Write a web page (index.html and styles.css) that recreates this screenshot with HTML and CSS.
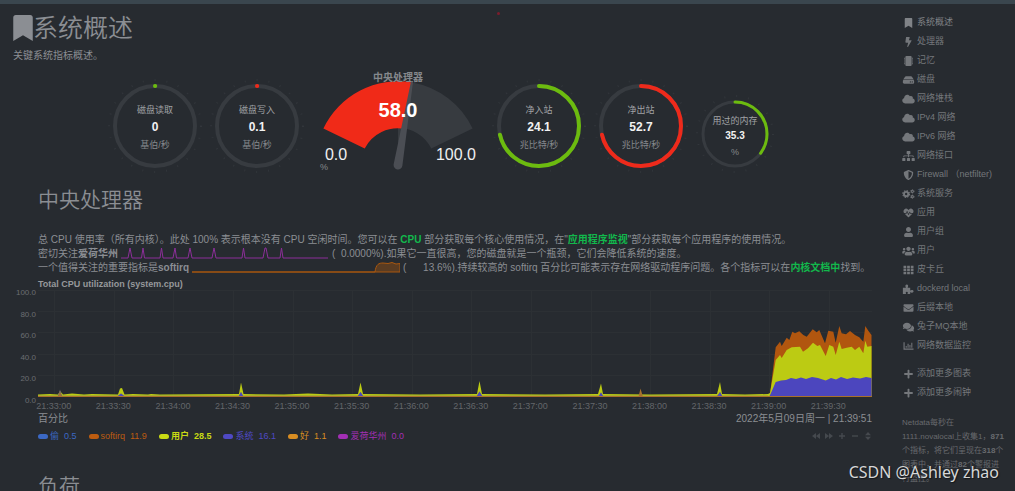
FILE: index.html
```html
<!DOCTYPE html>
<html lang="zh-CN">
<head>
<meta charset="utf-8">
<meta name="viewport" content="width=device-width, initial-scale=1">
<title>Netdata</title>
<link rel="stylesheet" href="styles.css">
</head>
<body>
<svg class="sprite" aria-hidden="true">
  <symbol id="bookmark" viewBox="0 0 384 512"><path d="M0 512V48C0 21.500 21.500 0 48 0h288c26.500 0 48 21.500 48 48v464L192 400 0 512z"/></symbol>
  <symbol id="bolt" viewBox="0 0 320 512"><path d="M296 160H180.600l42.600-129.800C227.200 15 215.700 0 200 0H56C44 0 33.800 8.900 32.200 20.800l-32 240C-1.700 275.200 9.500 288 24 288h118.700L96.600 482.500c-3.600 15.200 8 29.500 23.300 29.500 8.400 0 16.400-4.400 20.800-12l176-304c9.300-15.900-2.200-36-20.700-36z"/></symbol>
  <symbol id="chip" viewBox="0 0 512 512"><rect x="96" width="320" height="512" rx="48"/><path d="M30 88h46v48H30zM30 184h46v48H30zM30 280h46v48H30zM30 376h46v48H30zM436 88h46v48h-46zM436 184h46v48h-46zM436 280h46v48h-46zM436 376h46v48h-46z"/></symbol>
  <symbol id="hdd" viewBox="0 0 576 512"><path d="M576 304v96c0 26.510-21.490 48-48 48H48c-26.510 0-48-21.490-48-48v-96c0-26.510 21.490-48 48-48h480c26.510 0 48 21.490 48 48zm-48-80a79.557 79.557 0 0 1 30.777 6.165L462.250 85.374A48.003 48.003 0 0 0 422.311 64H153.689a48 48 0 0 0-39.938 21.374L17.223 230.165A79.557 79.557 0 0 1 48 224h480zm-48 96c-17.673 0-32 14.327-32 32s14.327 32 32 32 32-14.327 32-32-14.327-32-32-32zm-96 0c-17.673 0-32 14.327-32 32s14.327 32 32 32 32-14.327 32-32-14.327-32-32-32z"/></symbol>
  <symbol id="cloud" viewBox="0 0 640 512"><path d="M537.600 226.600c4.100-10.700 6.400-22.400 6.400-34.600 0-53-43-96-96-96-19.700 0-38.100 6-53.300 16.200C367 64.200 315.300 32 256 32c-88.400 0-160 71.600-160 160 0 2.700.1 5.400.2 8.100C40.200 219.800 0 273.200 0 336c0 79.500 64.500 144 144 144h368c70.700 0 128-57.300 128-128 0-61.900-44-113.600-102.400-125.400z"/></symbol>
  <symbol id="sitemap" viewBox="0 0 640 512"><path d="M128 352H32c-17.670 0-32 14.330-32 32v96c0 17.670 14.330 32 32 32h96c17.670 0 32-14.330 32-32v-96c0-17.670-14.330-32-32-32zm-24-80h192v48h48v-48h192v48h48v-57.590c0-21.170-17.230-38.410-38.410-38.410H344v-64h40c17.670 0 32-14.330 32-32V32c0-17.670-14.330-32-32-32H256c-17.670 0-32 14.330-32 32v96c0 17.670 14.330 32 32 32h40v64H94.410C73.230 224 56 241.230 56 262.410V320h48v-48zm264 80h-96c-17.670 0-32 14.330-32 32v96c0 17.670 14.330 32 32 32h96c17.670 0 32-14.330 32-32v-96c0-17.670-14.330-32-32-32zm240 0h-96c-17.670 0-32 14.330-32 32v96c0 17.670 14.330 32 32 32h96c17.670 0 32-14.330 32-32v-96c0-17.670-14.330-32-32-32z"/></symbol>
  <symbol id="shield" viewBox="0 0 512 512"><path d="M466.500 83.700l-192-80a48.150 48.150 0 0 0-36.900 0l-192 80C27.700 91.100 16 108.600 16 128c0 198.500 114.500 335.700 221.500 380.300 11.800 4.900 25.100 4.900 36.900 0C360.100 472.600 496 349.300 496 128c0-19.400-11.700-36.900-29.500-44.300zM256.100 446.300l-.1-381 175.900 73.300c-3.300 151.400-82.100 261.100-175.800 307.700z"/></symbol>
  <symbol id="cogs" viewBox="0 0 640 512"><g fill="none" stroke="currentColor"><circle cx="200" cy="256" r="110" stroke-width="100"/><circle cx="200" cy="256" r="172" stroke-width="60" stroke-dasharray="75 60"/><circle cx="515" cy="120" r="56" stroke-width="54"/><circle cx="515" cy="120" r="94" stroke-width="36" stroke-dasharray="46 52"/><circle cx="515" cy="395" r="56" stroke-width="54"/><circle cx="515" cy="395" r="94" stroke-width="36" stroke-dasharray="46 52"/></g></symbol>
  <symbol id="heart" viewBox="0 0 512 512"><path d="M320.200 243.800l-49.700 99.400c-6 12.100-23.400 11.700-28.900-.6l-56.900-126.300-30 71.700H60.600l182.500 186.500c7.100 7.300 18.600 7.300 25.700 0L451.400 288H342.300l-22.100-44.200zM473.700 73.900l-2.400-2.500c-51.500-52.600-135.800-52.600-187.400 0L256 100l-27.900-28.500c-51.500-52.700-135.900-52.700-187.400 0l-2.400 2.400C-10.400 123.700-12.500 203 31 256h102.400l35.900-86.200c5.400-12.900 23.600-13.100 29.300-.4l58.500 130 49-97.900c5.900-11.800 22.700-11.800 28.600 0l27.600 54.500H481c43.500-53 41.400-132.300-7.300-182.100z"/></symbol>
  <symbol id="user" viewBox="0 0 448 512"><path d="M224 256c70.700 0 128-57.300 128-128S294.700 0 224 0 96 57.300 96 128s57.300 128 128 128zm89.600 32h-16.700c-22.200 10.200-46.900 16-72.900 16s-50.600-5.800-72.900-16h-16.700C60.200 288 0 348.200 0 422.400V464c0 26.500 21.500 48 48 48h352c26.500 0 48-21.500 48-48v-41.600c0-74.200-60.200-134.400-134.400-134.400z"/></symbol>
  <symbol id="users" viewBox="0 0 640 512"><path d="M96 224c35.300 0 64-28.700 64-64s-28.700-64-64-64-64 28.700-64 64 28.700 64 64 64zm448 0c35.300 0 64-28.700 64-64s-28.700-64-64-64-64 28.700-64 64 28.700 64 64 64zm32 32h-64c-17.600 0-33.500 7.100-45.100 18.600 40.300 22.100 68.900 62 75.100 109.400h66c17.700 0 32-14.300 32-32v-32c0-35.300-28.700-64-64-64zm-256 0c61.900 0 112-50.100 112-112S381.900 32 320 32 208 82.100 208 144s50.100 112 112 112zm76.800 32h-8.300c-20.800 10-43.900 16-68.500 16s-47.600-6-68.500-16h-8.300C179.600 288 128 339.600 128 403.200V432c0 26.500 21.500 48 48 48h288c26.500 0 48-21.500 48-48v-28.800c0-63.600-51.600-115.200-115.200-115.200zm-223.700-13.400C161.500 263.100 145.600 256 128 256H64c-35.300 0-64 28.700-64 64v32c0 17.700 14.300 32 32 32h65.900c6.300-47.400 34.900-87.300 75.200-109.400z"/></symbol>
  <symbol id="grid" viewBox="0 0 512 512"><path d="M0 40h140v120H0zM186 40h140v120H186zM372 40h140v120H372zM0 196h140v120H0zM186 196h140v120H186zM372 196h140v120H372zM0 352h140v120H0zM186 352h140v120H186zM372 352h140v120H372z"/></symbol>
  <symbol id="puzzle" viewBox="0 0 576 512"><path d="M0 190h135c25 0 20-22 8-42-34-58-4-118 57-118s91 60 57 118c-12 20-17 42 8 42h110v120c0 25 22 22 42 10 70-38 130 5 130 55s-60 95-130 55c-20-12-42-15-42 10v72H252c-20 0-18-18-8-34 26-44 0-84-44-84s-70 40-44 84c10 16 12 34-8 34H0z"/></symbol>
  <symbol id="envelope" viewBox="0 0 512 512"><path d="M502.300 190.800c3.900-3.100 9.700-.2 9.700 4.700V400c0 26.500-21.500 48-48 48H48c-26.500 0-48-21.500-48-48V195.600c0-5 5.700-7.800 9.700-4.700 22.400 17.400 52.100 39.500 154.100 113.600 21.100 15.400 56.700 47.800 92.200 47.600 35.700.3 72-32.800 92.300-47.600 102-74.100 131.600-96.300 154-113.700zM256 320c23.200.4 56.600-29.200 73.400-41.400 132.700-96.300 142.800-104.700 173.400-128.700 5.800-4.500 9.200-11.500 9.200-18.900v-19c0-26.500-21.500-48-48-48H48c-26.500 0-48 21.500-48 48v19c0 7.400 3.400 14.300 9.200 18.900 30.600 23.900 40.700 32.400 173.400 128.700 16.800 12.200 50.200 41.800 73.400 41.400z"/></symbol>
  <symbol id="comments" viewBox="0 0 576 512"><path d="M416 192c0-88.400-93.100-160-208-160S0 103.600 0 192c0 34.300 14.100 65.900 38 92-13.400 30.200-35.500 54.200-35.800 54.500-2.200 2.300-2.800 5.700-1.500 8.700S4.800 352 8 352c36.600 0 66.900-12.300 88.700-25 32.200 15.700 70.300 25 111.300 25 114.900 0 208-71.600 208-160zm122 220c23.900-26 38-57.700 38-92 0-66.900-53.500-124.200-129.300-148.100.9 6.600 1.300 13.300 1.300 20.100 0 105.900-107.700 192-240 192-10.800 0-21.300-.8-31.700-1.900C207.800 439.600 281.800 480 368 480c41 0 79.100-9.200 111.300-25 21.800 12.700 52.100 25 88.700 25 3.200 0 6.100-1.900 7.300-4.800 1.300-2.900.7-6.300-1.500-8.700-.3-.3-22.400-24.200-35.800-54.500z"/></symbol>
  <symbol id="chart" viewBox="0 0 512 512"><path d="M0 64h58v326h454v58H0zM112 250h52v90h-52zM208 140h52v200h-52zM304 200h52v140h-52zM400 90h52v250h-52z"/></symbol>
  <symbol id="plus" viewBox="0 0 448 512"><path d="M416 208H272V64c0-17.670-14.330-32-32-32h-32c-17.670 0-32 14.330-32 32v144H32c-17.670 0-32 14.330-32 32v32c0 17.670 14.330 32 32 32h144v144c0 17.670 14.330 32 32 32h32c17.670 0 32-14.330 32-32V304h144c17.670 0 32-14.330 32-32v-32c0-17.670-14.330-32-32-32z"/></symbol>
</svg>

<div class="page">
  <div class="topbar"></div>
  <span class="marker"></span>
  <div class="layout">
    <main class="main">
      <h1 class="title"><svg class="title-icon"><use href="#bookmark"/></svg>系统概述</h1>
      <p class="lead">关键系统指标概述。</p>

      <div class="gauges">
        <svg class="ring" viewBox="0 0 85 88">
          <circle class="ticks" cx="42" cy="42" r="46"/>
          <circle class="track" cx="42" cy="42" r="40"/>
          <circle class="arc green" cx="42" cy="42" r="40" pathLength="100" stroke-dasharray="0.100 100" transform="rotate(-90 42 42)"/>
          <text class="name" x="42" y="29">磁盘读取</text><text class="value" x="42" y="47">0</text><text class="unit" x="42" y="64">基伯/秒</text>
        </svg>
        <svg class="ring" viewBox="0 0 85 88">
          <circle class="ticks" cx="42" cy="42" r="46"/>
          <circle class="track" cx="42" cy="42" r="40"/>
          <circle class="arc red" cx="42" cy="42" r="40" pathLength="100" stroke-dasharray="0.100 100" transform="rotate(-90 42 42)"/>
          <text class="name" x="42" y="29">磁盘写入</text><text class="value" x="42" y="47">0.1</text><text class="unit" x="42" y="64">基伯/秒</text>
        </svg>
        <svg class="dial" viewBox="0 0 163 102">
          <path class="dial-rest" d="M81 95L95.500 12.500A83 83 0 0 1 155.600 58.600L114.300 78.500A37 37 0 0 0 81 58z"/>
          <path class="dial-fill" d="M6.400 58.600A83 83 0 0 1 95.500 12.500L88 59A37 37 0 0 0 47.700 78.500z"/>
          <text class="dial-name" x="81" y="11">中央处理器</text>
          <path class="needle" d="M76.600 94.500L94 11.500L96 12L85.400 95.500A4.400 4.400 0 0 1 76.600 94.500z"/>
          <text class="dial-value" x="81" y="47">58.0</text>
          <text class="dial-limit" x="19" y="90">0.0</text>
          <text class="dial-limit" x="139" y="90">100.0</text>
          <text class="unit" x="7" y="100">%</text>
        </svg>
        <svg class="ring" viewBox="0 0 85 88">
          <circle class="ticks" cx="42" cy="42" r="46"/>
          <circle class="track" cx="42" cy="42" r="40"/>
          <circle class="arc green" cx="42" cy="42" r="40" pathLength="100" stroke-dasharray="71.500 100" transform="rotate(-90 42 42)"/>
          <text class="name" x="42" y="29">净入站</text><text class="value" x="42" y="47">24.1</text><text class="unit" x="42" y="64">兆比特/秒</text>
        </svg>
        <svg class="ring" viewBox="0 0 85 88">
          <circle class="ticks" cx="42" cy="42" r="46"/>
          <circle class="track" cx="42" cy="42" r="40"/>
          <circle class="arc red" cx="42" cy="42" r="40" pathLength="100" stroke-dasharray="71.500 100" transform="rotate(-90 42 42)"/>
          <text class="name" x="42" y="29">净出站</text><text class="value" x="42" y="47">52.7</text><text class="unit" x="42" y="64">兆比特/秒</text>
        </svg>
        <svg class="ring ring-small" viewBox="0 0 69 72">
          <circle class="ticks" cx="34" cy="34" r="38"/>
          <circle class="track" cx="34" cy="34" r="32"/>
          <circle class="arc green" cx="34" cy="34" r="32" pathLength="100" stroke-dasharray="35.300 100" transform="rotate(-90 34 34)"/>
          <text class="name" x="34" y="24">用过的内存</text><text class="value" x="34" y="39">35.3</text><text class="unit" x="34" y="55">%</text>
        </svg>
      </div>

      <section class="section">
        <h2 class="heading">中央处理器</h2>
        <p class="intro">总 CPU 使用率（所有内核）。此处 100% 表示根本没有 CPU 空闲时间。您可以在 <a href="#cpu">CPU</a> 部分获取每个核心使用情况，在"<a href="#apps">应用程序监视</a>"部分获取每个应用程序的使用情况。<br>密切关注<b>爱荷华州</b><svg class="spark" viewBox="0 0 208 14"><path class="spark-io" d="M0 11H7L9 1L11 11H20.500L22 1L23.500 11H39L40.500 1L42 11H52L54 1L55.500 11H67L69 1L71 11H91L93 1L95 11H121L122.500 1L124 11H142L144 1H145L147 11H159L160.500 1L162 11H207"/></svg>(&nbsp; 0.0000%).如果它一直很高，您的磁盘就是一个瓶颈，它们会降低系统的速度。<br>一个值得关注的重要指标是<b>softirq</b><svg class="spark" viewBox="0 0 208 14"><path class="spark-irq" d="M0 11H183C184 3 187 2 191 2L196 2.500L200 1.500L204 3L208 2.500V11z"/></svg>(&nbsp; &nbsp; &nbsp; 13.6%).持续较高的 softirq 百分比可能表示存在网络驱动程序问题。各个指标可以在<a href="#docs">内核文档中</a>找到。</p>

        <div class="chart">
          <h3 class="chart-title">Total CPU utilization (system.cpu)</h3>
          <div class="y-axis"><span>100.0</span><span>80.0</span><span>60.0</span><span>40.0</span><span>20.0</span><span>0.0</span></div>
          <svg class="plot" viewBox="38 289 834 110" preserveAspectRatio="none">
            <path class="gridlines" d="M38 290.500H872M38 311.500H872M38 332.500H872M38 354.500H872M38 375.500H872M54.500 290V397M114.500 290V397M173.500 290V397M233.500 290V397M293.500 290V397M352.500 290V397M412.500 290V397M471.500 290V397M531.500 290V397M591.500 290V397M650.500 290V397M710.500 290V397M769.500 290V397M829.500 290V397"/>
            <path class="s-irq" d="M769 397L770 394L775.700 347.300L780 341.700L781.700 346L786.700 337.700L789.300 340L792.300 331.700L795 333.300L799.300 331.300L803.300 335L806.700 336.700L812.700 329.300L816.700 332.300L819.300 330L825 343.300L828.300 330.700L833.300 331.700L835.700 342.700L839.300 326L841.700 333.300L846 334.300L850 331L855 335L859.300 337.300L863.300 341.700L865.300 326L868.300 330.700L871.500 335V397z"/>
            <path class="s-user" d="M38 397V394.500L50 394L58 394.500L60 391L63 394.500L72 393.500L84 394.500L92 394L118 394.500L120 388.500L122 388L124.500 394.500L133 394L148 394.500L151 394L160 394.500L239 394L241 382.500L243.500 394L284 394.500L308 393.500L332 394.500L358 394L360.500 382.500L363 394L420 394.500L477 394L479.500 381L482 394L545 394.500L598 394L601 383.500L603 394L650 394.500L717 394L720 382L722 394L745 394.500L768 394L770 393L775.700 360L780 355L781.700 358L786.700 350L791.700 347.300L800 346.700L803 351.700L808 348.300L813 342.700L817.300 346L820 345L825.700 356L829.300 345L833.300 346.700L835.700 355L839.300 341.700L841.700 349L846.700 347.700L851.700 346.700L855 350L859.300 346.700L863.300 353.300L865.300 340.700L867.300 346.700L871.500 346V397z"/>
            <path class="s-idle" d="M38 397V395.700H58L60 389.500L62 395.700H118L121 393.500L124 395.700H239L241 392L243 395.700H358L360.500 392L363 395.700H477L479.500 391.500L482 395.700H599L601 392.500L603 395.700H717L720 392L722 395.700H768V397z"/>
            <path class="s-system" d="M118 396L121 393.500L124 396zM239 396L241 392L243 396zM358 396L360.500 392L363 396zM477 396L479.500 391.500L482 396zM599 396L601 392.500L603 396zM718 396L720 392L722 396zM769 397L771 393L775.700 382L781 380.500L786 380L791 378L796 379L801 377.500L806 379L812 377L818 378L825.700 380.500L831 378L836 379.500L841 377L847 379L853 377.500L860 378.500L866 377L871.500 378V397z"/>
            <path class="s-nice" d="M38 396H872V397H38zM58 397L60 392L62 397zM638.500 397L640.500 388.500L643 397z"/>
          </svg>
          <div class="x-axis"><span>21:33:00</span><span>21:33:30</span><span>21:34:00</span><span>21:34:30</span><span>21:35:00</span><span>21:35:30</span><span>21:36:00</span><span>21:36:30</span><span>21:37:00</span><span>21:37:30</span><span>21:38:00</span><span>21:38:30</span><span>21:39:00</span><span>21:39:30</span></div>
          <div class="chart-meta"><span>百分比</span><time>2022年5月09日周一 | 21:39:51</time></div>
          <div class="chart-foot">
            <ul class="legend">
              <li class="steal">偷&nbsp; 0.5</li><li class="softirq">softirq&nbsp; 11.9</li><li class="user">用户&nbsp; 28.5</li><li class="system">系统&nbsp; 16.1</li><li class="nice">好&nbsp; 1.1</li><li class="iowait">爱荷华州&nbsp; 0.0</li>
            </ul>
            <div class="tools">
              <button type="button" aria-label="后退"><svg viewBox="0 0 8 8"><path d="M4 1v6L0 4zM8 1v6L4 4z"/></svg></button>
              <button type="button" aria-label="前进"><svg viewBox="0 0 8 8"><path d="M0 1v6l4-3zM4 1v6l4-3z"/></svg></button>
              <button type="button" aria-label="放大"><svg viewBox="0 0 8 8"><path d="M3.300 1h1.400v2.300H7v1.400H4.700V7H3.300V4.700H1V3.300h2.300z"/></svg></button>
              <button type="button" aria-label="缩小"><svg viewBox="0 0 8 8"><path d="M1 3.300h6v1.400H1z"/></svg></button>
              <button type="button" aria-label="调整高度"><svg viewBox="0 0 8 8"><path d="M4 0l3 3.200H1zM4 8l3-3.200H1z"/></svg></button>
            </div>
          </div>
        </div>
      </section>
      <section class="section">
        <h2 class="heading">负荷</h2>
      </section>
    </main>

    <aside class="side">
      <nav class="menu">
        <a class="active" href="#overview"><svg><use href="#bookmark"/></svg>系统概述</a>
        <a href="#cpus"><svg><use href="#bolt"/></svg>处理器</a>
        <a href="#mem"><svg><use href="#chip"/></svg>记忆</a>
        <a href="#disk"><svg><use href="#hdd"/></svg>磁盘</a>
        <a href="#net"><svg><use href="#cloud"/></svg>网络堆栈</a>
        <a href="#ipv4"><svg><use href="#cloud"/></svg>IPv4 网络</a>
        <a href="#ipv6"><svg><use href="#cloud"/></svg>IPv6 网络</a>
        <a href="#iface"><svg><use href="#sitemap"/></svg>网络接口</a>
        <a href="#firewall"><svg><use href="#shield"/></svg>Firewall （netfilter)</a>
        <a href="#services"><svg><use href="#cogs"/></svg>系统服务</a>
        <a href="#apps"><svg><use href="#heart"/></svg>应用</a>
        <a href="#groups"><svg><use href="#user"/></svg>用户组</a>
        <a href="#users-list"><svg><use href="#users"/></svg>用户</a>
        <a href="#pika"><svg><use href="#grid"/></svg>皮卡丘</a>
        <a href="#docker"><svg><use href="#puzzle"/></svg>dockerd local</a>
        <a href="#postfix"><svg><use href="#envelope"/></svg>后缀本地</a>
        <a href="#rabbit"><svg><use href="#comments"/></svg>兔子MQ本地</a>
        <a href="#monitor"><svg><use href="#chart"/></svg>网络数据监控</a>
      </nav>
      <nav class="menu menu-more">
        <a href="#add-charts"><svg><use href="#plus"/></svg>添加更多图表</a>
        <a href="#add-alarms"><svg><use href="#plus"/></svg>添加更多闹钟</a>
      </nav>
      <p class="note">Netdata每秒在<br>1111.novalocal上收集1，<b>871</b><br>个指标，将它们呈现在<b>318</b>个<br>图表中，并通过<b>82</b>个警报进<br>行监控。</p>
    </aside>
  </div>
  <div class="watermark">CSDN @Ashley zhao</div>
</div>
</body>
</html>
```
FILE: styles.css
```css
* { box-sizing: border-box; }
body, h1, h2, h3, p, ul { margin: 0; padding: 0; }
body {
  background: #272b30;
  color: #8b8e93;
  font-family: "Liberation Sans", "Noto Sans CJK SC", sans-serif;
  font-size: 10px;
  line-height: 14px;
}
.sprite { position: absolute; width: 0; height: 0; }
.page { position: relative; height: 100vh; overflow: hidden; }
.topbar { height: 4px; background: #3a464e; }
.marker { position: absolute; top: 12px; left: 49%; width: 3px; height: 3px; border-radius: 50%; background: #7c1c2c; }
.layout { display: grid; grid-template-columns: minmax(0, 1fr) 133px; }

.title { display: flex; align-items: center; padding: 9px 0 0 13px; font-size: 25px; line-height: 30px; font-weight: 350; }
.title-icon { width: 20px; height: 26px; fill: currentColor; }
.lead { padding: 6px 0 0 13px; }

.gauges { display: flex; justify-content: center; align-items: flex-end; gap: 17px; padding-top: 7px; }
.gauges svg { flex: none; overflow: visible; text-anchor: middle; }
.ring { width: 85px; height: 88px; }
.ring-small { width: 69px; height: 72px; }
.dial { width: 163px; height: 102px; }
.track, .arc, .ticks { fill: none; stroke-width: 4; }
.track { stroke: #373b40; }
.arc { stroke-linecap: round; }
.ticks { stroke: #32363b; stroke-width: 2; stroke-dasharray: 1 11; }
.green { stroke: #6cbb0f; }
.red { stroke: #ee2a1b; }
.ring-small .track, .ring-small .arc { stroke-width: 3; }
.name { fill: #a0a2a5; font-size: 9px; }
.value { fill: #f2f2f2; font-size: 12px; font-weight: bold; }
.ring-small .value { font-size: 10px; }
.unit { fill: #85888c; font-size: 9px; }
.dial-rest { fill: #373b40; }
.dial-fill { fill: #f02a18; }
.needle { fill: #4b4e54; }
.dial-name { fill: #85888c; font-size: 10px; font-weight: bold; }
.dial-value { fill: #fff; font-size: 20px; font-weight: bold; }
.dial-limit { fill: #f0f0f0; font-size: 16px; }

.section { padding: 0 10px 0 38px; }
.heading { padding-top: 14px; font-size: 21px; line-height: 28px; font-weight: 350; }
.intro { padding-top: 19px; white-space: nowrap; }
.intro a { color: #12b84c; font-weight: bold; text-decoration: none; }
.spark { width: 208px; height: 14px; margin: 0 3px; vertical-align: top; }
.spark-io { fill: none; stroke: #8c2f99; }
.spark-irq { fill: #5a3c22; stroke: #a8570f; }

.chart { position: relative; padding-top: 4px; }
.chart-title { font-size: 9px; line-height: 10px; color: #96989b; }
.y-axis { position: absolute; top: 13px; right: 100%; height: 118px; display: flex; flex-direction: column; justify-content: space-between; padding-right: 2px; text-align: right; font-size: 8px; line-height: 10px; color: #6b6e72; }
.plot { display: block; width: 100%; height: 110px; }
.gridlines { fill: none; stroke: #2c3034; }
.s-irq { fill: #b1560f; }
.s-user { fill: #bccb13; }
.s-idle { fill: #6c6470; }
.s-system { fill: #4c46be; }
.s-nice { fill: #a9702c; }
.x-axis { display: grid; grid-template-columns: repeat(14, 1fr); margin: 2px 14px 0 -14px; text-align: center; font-size: 9px; line-height: 10px; color: #63666a; }
.chart-meta { display: flex; justify-content: space-between; padding-top: 1px; line-height: 14px; }
.chart-foot { display: flex; justify-content: space-between; align-items: center; padding-top: 3px; }
.legend { display: flex; gap: 12px; list-style: none; font-size: 9px; line-height: 14px; }
.legend li { display: flex; align-items: center; gap: 2px; }
.legend li::before { content: ""; width: 10px; height: 5px; border-radius: 3px; background: currentColor; }
.steal { color: #3b68c4; }
.softirq { color: #bd5c10; }
.user { color: #c9da14; font-weight: bold; }
.system { color: #4f49c4; }
.nice { color: #d88d22; }
.iowait { color: #a22fb4; }
.tools { display: flex; gap: 5px; }
.tools button { width: 8px; height: 8px; padding: 0; border: 0; background: none; color: #45494e; }
.tools svg { display: block; width: 8px; height: 8px; fill: currentColor; }
.section + .section { padding-top: 16px; }

.side { padding: 9px 0 0 20px; color: #74777b; }
.menu { display: flex; flex-direction: column; font-size: 9px; line-height: 19px; }
.menu a { display: flex; align-items: center; gap: 2px; color: inherit; text-decoration: none; white-space: nowrap; }
.menu a.active { color: #808387; }
.menu svg { width: 13px; height: 10px; fill: currentColor; }
.menu-more { padding-top: 9px; }
.note { padding-top: 14px; font-size: 8px; color: #676a6e; white-space: nowrap; }
.watermark { position: absolute; right: 16px; bottom: 8px; color: #d6d7d8; font-family: "Noto Sans", sans-serif; font-size: 16px; line-height: 22px; text-shadow: 1px 1px 1px #15181b; }
```
